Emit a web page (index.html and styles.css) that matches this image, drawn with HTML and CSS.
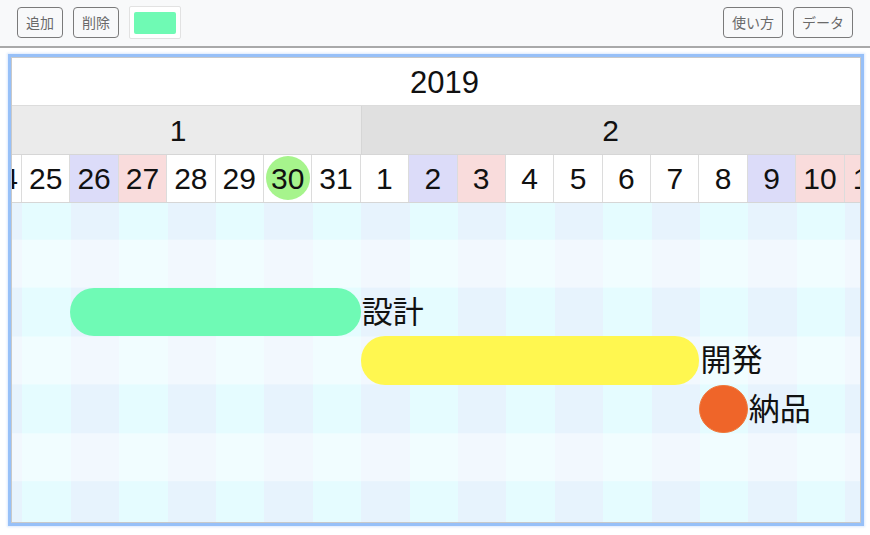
FILE: index.html
```html
<!DOCTYPE html>
<html lang="ja">
<head>
<meta charset="utf-8">
<title>Gantt</title>
<link rel="stylesheet" href="styles.css">
</head>
<body>
<div class="toolbar">
  <div class="group">
    <button class="btn">追加</button>
    <button class="btn">削除</button>
    <div class="color-pick"><span class="swatch"></span></div>
  </div>
  <div class="group">
    <button class="btn">使い方</button>
    <button class="btn">データ</button>
  </div>
</div>
<div class="gantt">
  <div class="year">2019</div>
  <div class="viewport">
    <div class="strip">
      <div class="months">
        <div class="month m1">1</div>
        <div class="month m2">2</div>
      </div>
      <div class="days">
        <div class="day">24</div>
        <div class="day">25</div>
        <div class="day sat">26</div>
        <div class="day sun">27</div>
        <div class="day">28</div>
        <div class="day">29</div>
        <div class="day today"><span class="today-dot">30</span></div>
        <div class="day">31</div>
        <div class="day">1</div>
        <div class="day sat">2</div>
        <div class="day sun">3</div>
        <div class="day">4</div>
        <div class="day">5</div>
        <div class="day">6</div>
        <div class="day">7</div>
        <div class="day">8</div>
        <div class="day sat">9</div>
        <div class="day sun">10</div>
        <div class="day sun">11</div>
      </div>
      <div class="chart">
        <div class="chart-grid">
          <div class="task t-design"><span class="bar green"></span><span class="label">設計</span></div>
          <div class="task t-dev"><span class="bar yellow"></span><span class="label">開発</span></div>
          <div class="task t-ship"><span class="dot orange"></span><span class="label">納品</span></div>
        </div>
      </div>
    </div>
  </div>
</div>
</body>
</html>
```
FILE: styles.css
```css
* { box-sizing: border-box; }
html, body { margin: 0; padding: 0; background: #fff; }
body {
  font-family: "Liberation Sans", "Noto Sans CJK JP", sans-serif;
  color: #111;
  width: 870px;
  height: 535px;
  overflow: hidden;
}
.toolbar {
  height: 48px;
  background: #f8f9fa;
  border-bottom: 2px solid #a9a9a9;
  display: flex;
  justify-content: space-between;
  align-items: center;
  padding: 0 17px 1px 17px;
}
.group { display: flex; align-items: center; gap: 10px; }
.btn {
  height: 31px;
  padding: 0 8px;
  border: 1px solid #7a7a7a;
  border-radius: 4px;
  background: #f8f9fa;
  color: #6a6a6a;
  font-family: "Noto Sans CJK JP", sans-serif;
  font-size: 14px;
  line-height: 29px;
}
.color-pick {
  width: 52px;
  height: 33px;
  background: #fff;
  border: 1px solid #e2e2e2;
  border-radius: 2px;
  display: flex;
  align-items: center;
  justify-content: center;
}
.swatch {
  width: 42px;
  height: 22px;
  border-radius: 2px;
  background: #6ffab4;
}
.gantt {
  margin: 9px 9px 0 11px;
  width: 850px;
  height: 466px;
  border: 1px solid #c9c9c9;
  box-shadow: 0 0 0 3px #97c0f8, 0 0 2px 4px rgba(151, 192, 248, 0.35);
  display: flex;
  flex-direction: column;
  overflow: hidden;
}
.year {
  flex: none;
  height: 48.4px;
  border-bottom: 1px solid #dcdcdc;
  background: #fff;
  font-size: 31px;
  line-height: 50px;
  text-align: center;
  padding-left: 17px;
}
.viewport {
  flex: 1;
  overflow: hidden;
}
.strip {
  width: 919.6px;
  margin-left: -38.4px;
  height: 100%;
  display: flex;
  flex-direction: column;
}
.months {
  display: flex;
  height: 48.4px;
  flex: none;
  border-bottom: 1px solid #d6d6d6;
}
.month {
  font-size: 30px;
  line-height: 49px;
  text-align: center;
}
.m1 { width: 387.2px; background: #ebebeb; padding-left: 21.6px; }
.m2 { width: 532.4px; background: #e0e0e0; padding-right: 34px; border-left: 1px solid #d6d6d6; }
.days {
  display: flex;
  height: 48.4px;
  flex: none;
  border-bottom: 1px solid #d6d6d6;
  background: #fff;
}
.day {
  width: 48.4px;
  flex: none;
  border-right: 1px solid #dcdcdc;
  font-size: 30px;
  display: flex;
  align-items: center;
  justify-content: center;
  padding-top: 2px;
}
.day:first-child { justify-content: flex-end; padding-right: 3px; }
.sat { background: #dcdcf9; }
.sun { background: #f9dcdc; }
.today-dot {
  width: 44px;
  height: 44px;
  border-radius: 50%;
  background: #a6f48c;
  display: flex;
  align-items: center;
  justify-content: center;
  margin-top: -2px;
  padding-top: 2px;
}
.chart {
  flex: 1;
  overflow: hidden;
  background:
    repeating-linear-gradient(180deg, transparent 0 48.4px, rgba(255,255,255,0.45) 48.4px 96.8px) 0 -12.2px / 100% 96.8px,
    repeating-linear-gradient(90deg, #e7f3fd 0 48.4px, #e5fcff 48.4px 96.8px);
}
.chart-grid {
  margin-top: -12.2px;
  display: grid;
  grid-template-columns: repeat(19, 48.4px);
  grid-template-rows: repeat(7, 48.4px);
}
.task {
  display: flex;
  align-items: center;
  min-width: 0;
  white-space: nowrap;
}
.t-design { grid-column: 3 / span 6; grid-row: 3; }
.t-dev { grid-column: 9 / span 7; grid-row: 4; }
.t-ship { grid-column: 16 / span 1; grid-row: 5; }
.bar {
  flex: none;
  width: 100%;
  height: 48.4px;
  border-radius: 24px;
}
.dot {
  flex: none;
  width: 48.4px;
  height: 48.4px;
  border-radius: 50%;
}
.green { background: #6ffab5; }
.yellow { background: #fff750; }
.orange { background: #ef6529; border: 1px solid #f07a3c; }
.label {
  flex: none;
  padding-left: 1px;
  margin-top: -5px;
  font-family: "Noto Sans CJK JP", sans-serif;
  font-size: 31px;
  line-height: 1;
  color: #111;
}
```
